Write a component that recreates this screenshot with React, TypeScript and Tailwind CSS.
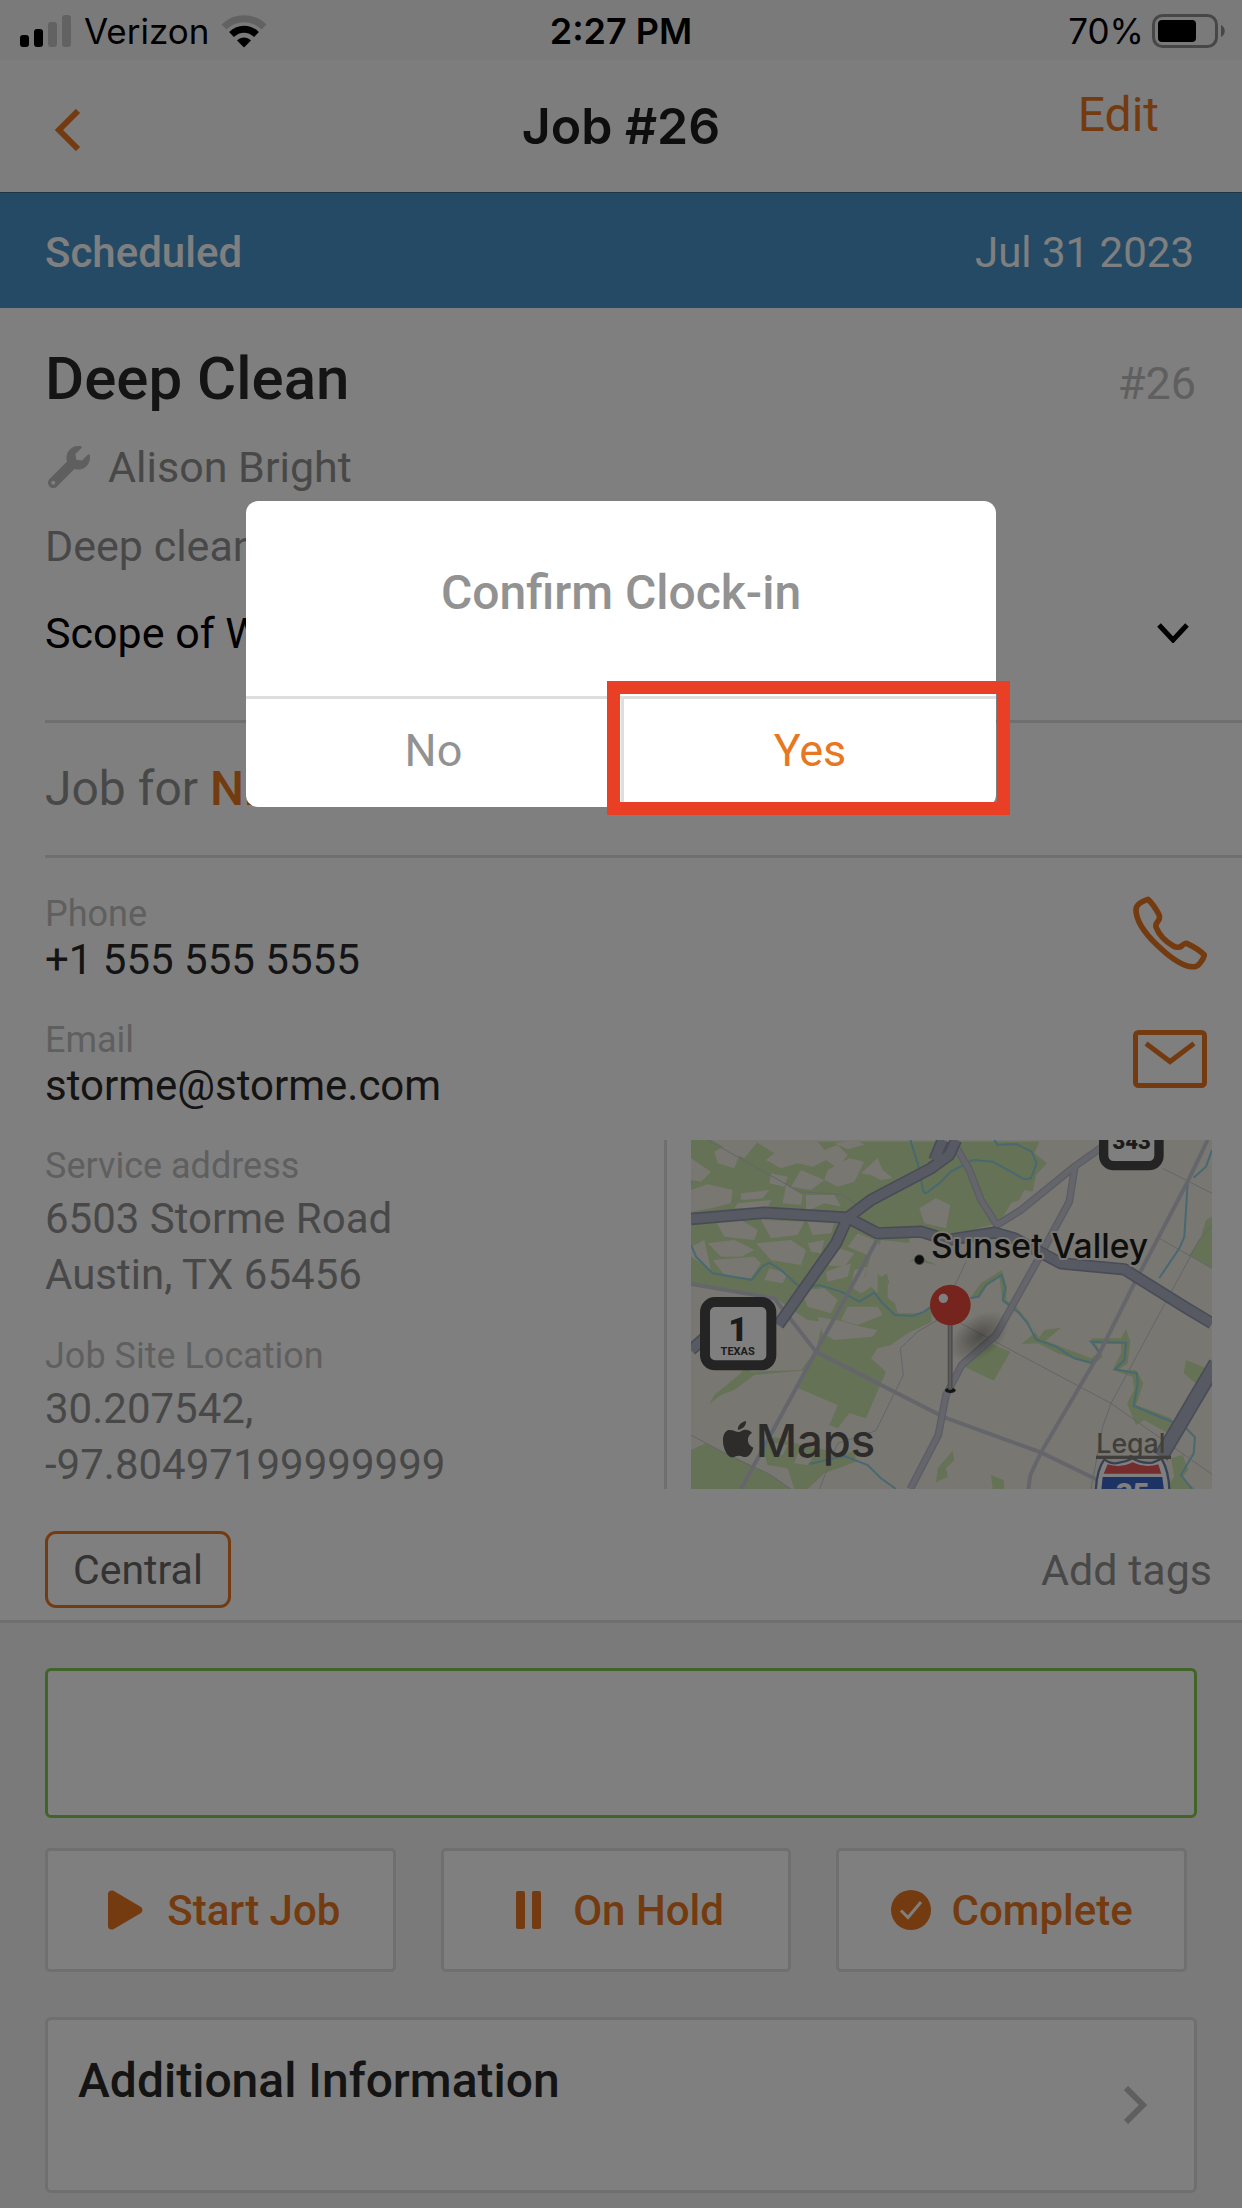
import React from "react";
import { FaWrench } from "react-icons/fa";

function SignalIcon() {
  return (
    <svg className="h-[34px] w-[52px]" viewBox="0 0 52 34" aria-hidden="true">
      <rect x="0" y="21" width="9" height="12" rx="3" fill="#000" />
      <rect x="14" y="15" width="9" height="18" rx="3" fill="#000" />
      <rect x="28" y="8" width="9" height="25" rx="3" fill="#c4c4c4" />
      <rect x="42" y="1" width="9" height="32" rx="3" fill="#c4c4c4" />
    </svg>
  );
}

function WifiIcon() {
  return (
    <svg className="h-[34px] w-[46px]" viewBox="0 0 46 34" fill="none" aria-hidden="true">
      <path d="M3 13C14 2 32 2 43 13" stroke="#c4c4c4" strokeWidth="7" />
      <path d="M10.500 20.500C18 13.500 28 13.500 35.500 20.500" stroke="#000" strokeWidth="7" />
      <path d="M16 26.500C20 22.500 26 22.500 30 26.500L23 33.500Z" fill="#000" />
    </svg>
  );
}

function BatteryIcon() {
  return (
    <svg className="h-[34px] w-[74px]" viewBox="0 0 74 34" aria-hidden="true">
      <rect x="1.500" y="1.500" width="63" height="31" rx="9" fill="none" stroke="#8e8e8e" strokeWidth="3" />
      <rect x="6" y="6" width="38" height="22" rx="4" fill="#000" />
      <path d="M69 11C74 13 74 21 69 23Z" fill="#8e8e8e" />
    </svg>
  );
}

function PhoneIcon() {
  return (
    <svg className="h-[74px] w-[74px]" viewBox="273 109 222 222" fill="none" stroke="#e87722" strokeWidth="17" strokeLinejoin="round" aria-hidden="true">
      <path d="M318 119C296 126 282 138 282 150C282 188 318 230 346 257C378 288 412 312 436 319C452 323 464 322 470 315C480 304 485 296 487 286C474 272 453 260 434 251C429 250 424 254 419 259C413 264 402 264 394 259C368 244 351 226 342 202C340 192 345 188 349 183C354 176 354 171 350 163C341 146 329 129 318 119Z" />
    </svg>
  );
}

function MailIcon() {
  return (
    <svg className="h-[58px] w-[74px]" viewBox="0 0 74 58" fill="none" stroke="#e87722" strokeWidth="5" aria-hidden="true">
      <rect x="2.500" y="2.500" width="69" height="53" rx="3" />
      <path d="M13 13.500L37 31.500L61 13.500" />
    </svg>
  );
}

function AreaMap() {
  return (
    <svg className="block h-auto w-full" viewBox="0 0 1563 1047" role="img" aria-label="Map of Sunset Valley" fontFamily="Inter, sans-serif">
      <defs>
        <radialGradient id="pinShadow">
          <stop offset="0" stopColor="#000" stopOpacity="0.35" />
          <stop offset="1" stopColor="#000" stopOpacity="0" />
        </radialGradient>
      </defs>
      <rect width="1563" height="1047" fill="#f2eee2" />

      {/* parks */}
      <g fill="#cae4ab">
        <path d="M0 0H60L160 55L200 5H1045L1030 40L1068 70L1035 105L1025 155L1000 150L985 180L960 190L925 250L870 262L800 290L700 262L560 262L520 420L560 460L560 400L640 360L740 375L650 340L660 262L560 300L620 520L700 520L720 500L722 545L650 580L600 615L560 625L540 655L585 695L525 835L475 820L440 865L415 855L440 795L322 745L350 690L190 705L130 750L90 765L55 792L70 765L150 700L170 670L180 695L330 690L375 630L395 545L350 540L290 500L250 470L0 430V350L60 390L40 300L0 320Z" />
        <path d="M820 680L890 605L958 636L908 722Z" />
        <path d="M840 470L870 430L932 390L948 440L945 480L975 500L1010 540L1045 595L1110 620L1200 655L1220 640L1200 595L1290 595L1305 568L1318 605L1310 670L1280 690L1335 690L1357 730L1335 795L1390 815L1440 835L1450 870L1430 880L1360 840L1335 855L1308 790L1330 750L1325 710L1265 690L1290 640L1290 612L1215 612L1235 650L1205 675L1100 640L1040 610L992 612L1035 575L1000 530L935 485L925 410L890 435L865 475Z" />
        <path d="M1040 600L1060 570L1110 563L1060 605Z" />
        <path d="M1545 240L1563 230V385L1495 345L1530 290Z" />
        <path d="M1485 660L1545 685L1520 735L1478 700Z" />
        <path d="M0 930L45 910L130 950L250 1010L300 1047H0Z" />
        <path d="M215 930L250 890L330 915L405 930L440 955L490 930L495 965L400 1000L350 1047H310L290 985L230 975Z" />
        <path d="M740 985L785 932L790 960L765 985L770 1010L735 1027Z" />
        <path d="M900 1005L938 1020L940 1047H905Z" />
        <path d="M1440 955L1475 945L1492 990L1475 1010L1510 1047H1420L1450 1010Z" />
      </g>

      {/* built-up blocks inside the parks */}
      <g fill="#f2eee2">
        <path d="M70 35L115 10L145 45L130 85L80 70Z" />
        <path d="M195 5H380L400 30L440 15L470 45L440 85L405 60L365 80L320 70L270 85L225 60L250 40Z" />
        <path d="M410 90L475 55L520 65L490 125L440 140L400 120Z" />
        <path d="M430 10L500 0L520 15L470 28Z" />
        <path d="M0 55L60 95L30 125L0 120Z" />
        <path d="M0 150L50 133L125 150L120 190L60 205L0 215Z" />
        <path d="M150 160L235 150L215 175L150 180Z" />
        <path d="M140 190L240 180L230 205L130 205Z" />
        <path d="M240 100L290 110L280 140L235 130Z" />
        <path d="M285 135L335 165L330 195L275 190Z" />
        <path d="M345 165L430 165L450 200L400 190L345 215Z" />
        <path d="M330 90L400 120L360 150L300 140Z" />
        <path d="M510 100L560 55L575 90L605 115L570 120L540 105Z" />
        <path d="M685 205L735 175L778 195L765 265L700 250Z" />
        <path d="M75 245L150 240L200 270L190 300L100 290Z" />
        <path d="M210 240L340 245L320 285L240 295Z" />
        <path d="M350 245L430 250L420 280L365 285Z" />
        <path d="M50 310L130 300L190 330L150 350L90 350Z" />
        <path d="M195 310L300 300L345 330L330 375L240 360Z" />
        <path d="M350 310L400 300L390 340L360 335Z" />
        <path d="M65 360L190 350L210 370L180 415L100 405Z" />
        <path d="M235 385L290 400L275 430L220 420Z" />
        <path d="M430 320L490 340L460 380L400 375Z" />
        <path d="M405 395L480 370L470 410L410 425Z" />
        <path d="M490 390L530 380L520 410L560 430L510 460L480 440Z" />
        <path d="M330 450L400 445L440 480L420 520L350 500Z" />
        <path d="M470 500L560 500L575 525L500 555L450 540Z" />
        <path d="M380 530L460 545L510 560L560 570L545 590L430 600L395 580Z" />
        <path d="M500 280L550 300L530 345L470 320Z" />
        <path d="M570 300L660 310L670 355L570 410L545 390Z" />
        <path d="M590 430L650 420L720 450L720 500L640 510L590 475Z" />
        <path d="M250 910L290 915L275 945L240 930Z" />
        <path d="M320 940L370 945L350 975L310 970Z" />
      </g>

      {/* water */}
      <g fill="none" stroke="#90d0e4" strokeWidth="6">
        <path d="M658 0L680 70L690 120L697 155L705 160L745 130L780 95L845 60L905 65L960 95L1000 118L1020 115L1037 70L1022 35L975 12L920 15L910 0" />
        <path d="M0 315L15 350L65 400L182 420L215 378L235 368L270 390L330 445L385 435L450 455L505 485L550 458L575 490L612 525L665 528L700 515L720 500" />
        <path d="M838 475L862 470L885 435L932 405L943 445L935 480L985 520L1010 550L1035 598L1095 620L1150 655L1200 668L1228 640L1200 605L1305 608L1300 660L1272 688L1338 700L1340 730L1328 798L1400 828L1480 860L1512 892L1508 940L1470 1005L1503 1047" />
        <path d="M1563 30L1545 80L1508 113M1490 130L1480 290L1465 325L1405 414" />
        <path d="M355 972L460 948L530 975L570 1015L615 1047" />
      </g>

      {/* local roads */}
      <g fill="none" stroke="#c8cad6" strokeWidth="3">
        <path d="M50 0L325 155L450 163L500 195" />
        <path d="M825 365L790 440L740 540L680 575L628 625L637 705L555 872L440 910L385 1047" />
        <path d="M800 545L950 625L1260 790L1563 1003" />
        <path d="M1415 85L1563 160M1405 295L1563 385M1563 255L1525 300L1260 790L1235 860L1200 1047" />
        <path d="M0 885L120 950L230 1000L300 1047" />
      </g>
      <g fill="none" stroke="#cbcdd8" strokeWidth="12">
        <path d="M558 300L375 635L150 1047" />
        <path d="M0 432L250 475L375 635L760 832L1050 937L1220 1020" />
        <path d="M1550 0L1490 125L1330 430L1225 640L1050 937L1018 1005L1012 1047" />
      </g>

      {/* main roads */}
      <g fill="none" stroke="#b9bbc8" strokeWidth="23" strokeLinejoin="round">
        <path d="M795 20L835 90L870 180L918 255L990 210L1150 80L1235 20" />
        <path d="M1152 78L1135 185L1035 370L915 585L812 675L765 765L742 885L658 1047" />
      </g>
      <g fill="none" stroke="#cacCd7" strokeWidth="15" strokeLinejoin="round">
        <path d="M795 20L835 90L870 180L918 255L990 210L1150 80L1235 20" />
        <path d="M1152 78L1135 185L1035 370L915 585L812 675L765 765L742 885L658 1047" />
      </g>

      {/* highways */}
      <g fill="none" stroke="#9297ae" strokeWidth="37" strokeLinejoin="round">
        <path d="M0 237L220 218L470 233L560 280L690 275L770 300L910 278L970 295L1110 370L1300 388L1480 500L1563 550" />
        <path d="M795 0L775 45L720 85L540 180L470 233L435 310L262 555M755 0L730 60M0 630L45 590" />
        <path d="M1575 670L1410 950" strokeWidth="46" />
      </g>
      <g fill="none" stroke="#b0b5c6" strokeWidth="27" strokeLinejoin="round">
        <path d="M0 237L220 218L470 233L560 280L690 275L770 300L910 278L970 295L1110 370L1300 388L1480 500L1563 550" />
        <path d="M795 0L775 45L720 85L540 180L470 233L435 310L262 555M755 0L730 60M0 630L45 590" />
        <path d="M1575 670L1410 950" strokeWidth="36" />
      </g>

      {/* route shields */}
      <rect x="42" y="486" width="199" height="190" rx="30" fill="#fff" stroke="#484848" strokeWidth="30" />
      <text x="141" y="602" textAnchor="middle" fontFamily="Roboto, sans-serif" fontWeight="900" fontSize="102" fill="#383838">1</text>
      <text x="140" y="646" textAnchor="middle" fontFamily="Roboto, sans-serif" fontWeight="700" fontSize="33" fill="#383838">TEXAS</text>
      <rect x="1238" y="-110" width="166" height="187" rx="30" fill="#fff" stroke="#484848" strokeWidth="28" />
      <text x="1322" y="26" textAnchor="middle" fontFamily="Roboto, sans-serif" fontWeight="900" fontSize="66" fill="#383838">343</text>
      <path d="M1240 958Q1262 975 1285 968Q1305 966 1325 955Q1350 972 1385 968L1412 956Q1436 1000 1435 1060H1214Q1216 990 1240 958Z" fill="#fff" stroke="#7080ac" strokeWidth="7" />
      <path d="M1250 973Q1290 985 1325 967Q1362 985 1402 973L1411 1001H1238Z" fill="#e8595b" />
      <path d="M1235 1011H1414L1420 1060H1230Z" fill="#3866c8" />
      <text x="1325" y="1091" textAnchor="middle" fontFamily="Roboto, sans-serif" fontWeight="900" fontSize="86" fill="#fff">35</text>

      {/* place label */}
      <circle cx="685" cy="359" r="16" fill="#1c1c1c" stroke="#fff" strokeOpacity="0.5" strokeWidth="5" />
      <text x="720" y="354" fontSize="101" fontWeight="500" fill="#1c1c1c" stroke="#f2eee2" strokeWidth="12" strokeLinejoin="round" paintOrder="stroke">Sunset Valley</text>

      {/* pin */}
      <ellipse cx="865" cy="590" rx="100" ry="62" fill="url(#pinShadow)" transform="rotate(-35 865 590)" />
      <ellipse cx="778" cy="751" rx="16" ry="8" fill="#2c2c2c" />
      <rect x="770" y="550" width="15" height="200" rx="7" fill="#9c9c9c" />
      <rect x="774" y="550" width="6" height="196" fill="#b8b8b8" />
      <circle cx="778" cy="495" r="61" fill="#ec483c" />
      <circle cx="757" cy="475" r="14" fill="#fff" />

      {/* attribution */}
      <g fill="#5a5854">
        <path d="M165 843C149 847 139 858 141 869C155 868 166 857 165 843Z" />
        <path d="M143 876C134 876 125 868 113 870C101 873 95 887 96 905C97 926 109 951 123 952C130 952 134 947 144 947C153 947 157 952 164 951C175 950 184 934 187 923C165 914 167 887 183 879C176 869 165 868 158 870C152 872 148 876 143 876Z" />
        <text x="194" y="950" fontSize="136" fontWeight="500">Maps</text>
      </g>
      <text x="1216" y="938" fontSize="80" fontWeight="500" fill="#807e78">Legal</text>
      <rect x="1215" y="947" width="225" height="10" fill="#807e78" />
    </svg>
  );
}

function Chevron({ d, box, className, width }: { d: string; box: string; className: string; width: number }) {
  return (
    <svg className={className} viewBox={box} fill="none" stroke="currentColor" strokeWidth={width} aria-hidden="true">
      <path d={d} />
    </svg>
  );
}

function Field({ label, children }: { label: string; children: React.ReactNode }) {
  return (
    <div className="text-[42px] leading-[48px] text-[#292929]">
      <div className="text-[36px] leading-[44px] text-[#bfbfbf]">{label}</div>
      {children}
    </div>
  );
}

function Location({ label, lines }: { label: string; lines: string[] }) {
  return (
    <div>
      <div className="text-[36px] leading-[44px] text-[#bfbfbf]">{label}</div>
      <div className="mt-[3px] text-[42px] leading-[56px] text-[#919191]">
        {lines.map((line) => (
          <div key={line}>{line}</div>
        ))}
      </div>
    </div>
  );
}

const actionClass =
  "flex h-[124px] flex-1 items-center justify-center rounded-[5px] border-[3px] border-[#dedede] bg-white text-[42px] font-medium text-[#e87722]";

export default function App() {
  return (
    <div className="relative flex min-h-screen flex-col bg-[#f5f5f5] font-['Roboto',sans-serif]">
      <div className="grid h-[60px] grid-cols-3 items-center px-4 pt-0.5 font-['Inter',sans-serif] text-[35px] leading-[44px] text-black">
        <div className="flex items-center gap-3 pl-1">
          <SignalIcon />
          <span>Verizon</span>
          <WifiIcon />
        </div>
        <div className="text-center text-[36px] font-semibold">2:27 PM</div>
        <div className="flex items-center justify-end gap-2">
          <span>70%</span>
          <BatteryIcon />
        </div>
      </div>

      <header className="grid h-[133px] grid-cols-[1fr_auto_1fr] items-center border-b border-[#3c6e8c] bg-[#fbfbfb] px-[55px]">
        <button type="button" aria-label="Back" className="mt-2 w-[26px] text-[#e87722]">
          <Chevron className="h-[42px] w-[26px]" box="0 0 26 42" d="M23 2L4 21L23 40" width={6} />
        </button>
        <h1 className="text-center font-['Inter',sans-serif] text-[50px] leading-[60px] font-semibold whitespace-nowrap text-[#1c1c1c]">Job #26</h1>
        <button type="button" className="mt-[27px] mr-7 self-start justify-self-end text-[48px] leading-[56px] text-[#e87722]">
          Edit
        </button>
      </header>

      <div className="flex h-[115px] items-center justify-between bg-[#4b94ca] pr-12 pl-[45px] pt-1 text-[42px] leading-[56px] text-white">
        <span className="font-medium">Scheduled</span>
        <span>Jul 31 2023</span>
      </div>

      <main className="flex flex-col">
        <section className="border-b-[3px] border-[#dedede] bg-white pt-[35px] pb-3 pl-[45px]">
          <div className="flex items-baseline justify-between pr-[46px]">
            <h2 className="text-[60px] leading-[72px] font-medium text-[#292929]">Deep Clean</h2>
            <span className="text-[45px] leading-[56px] text-[#bfbfbf]">#26</span>
          </div>
          <div className="mt-6 flex items-center gap-[18px] text-[43px] leading-[56px] text-[#919191]">
            <FaWrench className="ml-[3px] size-[42px] text-[#bfbfbf]" aria-hidden="true" />
            <span>Alison Bright</span>
          </div>
          <p className="mt-[23px] text-[43px] leading-[56px] text-[#919191]">Deep clean</p>
          <button type="button" className="mt-[31px] flex w-full items-center justify-between pr-[53px] text-[43px] leading-[56px] text-black">
            <span>Scope of Work</span>
            <Chevron className="h-[20px] w-[32px]" box="0 0 32 20" d="M2 2L16 17L30 2" width={5} />
          </button>

          <div className="mt-[59px] flex h-[138px] items-center border-y-[3px] border-[#dedede] text-[48px] leading-[60px] text-[#919191]">
            <p>
              Job for <a href="#customer" className="font-medium text-[#e87722]">Nicholas Storme</a>
            </p>
          </div>

          <div className="flex items-start justify-between pr-[35px]">
            <div className="flex flex-col gap-[34px] pt-[34px]">
              <Field label="Phone">+1 555 555 5555</Field>
              <Field label="Email">storme@storme.com</Field>
            </div>
            <div className="flex flex-col gap-[60px] pt-[38px]">
              <a href="tel:+15555555555" aria-label="Call"><PhoneIcon /></a>
              <a href="mailto:storme@storme.com" aria-label="Send email"><MailIcon /></a>
            </div>
          </div>

          <div className="mt-[30px] flex items-start pr-[30px]">
            <div className="flex flex-1 flex-col gap-[31px] pt-1">
              <Location label="Service address" lines={["6503 Storme Road", "Austin, TX 65456"]} />
              <Location label="Job Site Location" lines={["30.207542,", "-97.80497199999999"]} />
            </div>
            <div className="w-[548px] border-l-[3px] border-[#dedede] pl-6">
              <AreaMap />
            </div>
          </div>

          <div className="mt-[38px] flex items-center justify-between pr-[30px]">
            <span className="flex h-[77px] items-center rounded-[11px] border-[3px] border-[#e87722] px-[25px] text-[41px] leading-[48px] text-[#666]">Central</span>
            <button type="button" className="text-[43px] leading-[56px] text-[#919191]">Add tags</button>
          </div>
        </section>

        <section className="flex flex-col px-[45px] pt-[45px] pb-[14px]">
          <div className="h-[150px] rounded-[6px] border-[3px] border-[#82c850] bg-white" />
          <div className="mt-[30px] flex gap-[45px] pr-[10px]">
            <button type="button" className={actionClass}>
              <svg className="mr-6 ml-2 h-[40px] w-[35px]" viewBox="0 0 35 40" fill="currentColor" aria-hidden="true">
                <path d="M0 4Q0 0 5 0.500L33 17Q36 20 33 23L5 39.500Q0 40 0 36Z" />
              </svg>
              Start Job
            </button>
            <button type="button" className={actionClass}>
              <svg className="mr-8 ml-2 h-[38px] w-[25px]" viewBox="0 0 25 38" fill="currentColor" aria-hidden="true">
                <rect x="0" y="0" width="9" height="38" rx="2" />
                <rect x="16" y="0" width="9" height="38" rx="2" />
              </svg>
              On Hold
            </button>
            <button type="button" className={actionClass}>
              <svg className="mr-[21px] size-[40px]" viewBox="0 0 40 40" aria-hidden="true">
                <circle cx="20" cy="20" r="20" fill="currentColor" />
                <path d="M10 20.500L17 27.500L30 12" fill="none" stroke="#fff" strokeWidth="3" />
              </svg>
              Complete
            </button>
          </div>
          <button type="button" className="mt-[45px] flex h-[176px] items-center justify-between rounded-[6px] border-[3px] border-[#dedede] bg-white pr-[47px] pl-[30px] text-left text-[#292929]">
            <span className="mt-[31px] self-start text-[48px] leading-[60px] font-medium">Additional Information</span>
            <span className="text-[#bfbfbf]">
              <Chevron className="h-[38px] w-[23px]" box="0 0 23 38" d="M2 2L19 19L2 36" width={6} />
            </span>
          </button>
        </section>
      </main>

      <div className="absolute inset-0 flex items-start justify-center bg-black/50 pt-[501px]">
        <div role="dialog" aria-modal="true" aria-labelledby="confirm-title" className="h-[306px] w-[750px] rounded-[12px] bg-white text-[#929292]">
          <h2 id="confirm-title" className="flex h-[198px] items-center justify-center border-b-[3px] border-[#dedede] pb-3 text-center text-[48px] leading-[60px] font-medium">
            Confirm Clock-in
          </h2>
          <div className="grid h-[108px] grid-cols-2 text-[45px] leading-[56px]">
            <button type="button" className="pb-[5px]">No</button>
            <div className="relative border-l-[3px] border-[#dedede]">
              <button type="button" className="h-full w-full pb-[5px] text-[#e87722]">Yes</button>
              <div className="pointer-events-none absolute -top-[18px] -right-[14px] -bottom-[8px] -left-[17px] border-[13px] border-[#e93f24]" />
            </div>
          </div>
        </div>
      </div>
    </div>
  );
}
